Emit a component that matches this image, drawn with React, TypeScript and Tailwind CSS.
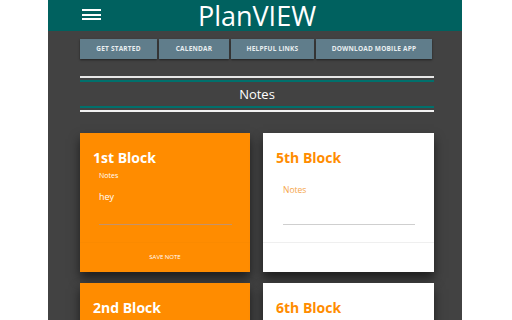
const font = { fontFamily: '"Open Sans", "Noto Sans", sans-serif' };

const navItems = [
  { label: 'GET STARTED', width: 'w-[77px]' },
  { label: 'CALENDAR', width: 'w-[70px]' },
  { label: 'HELPFUL LINKS', width: 'w-[83px]' },
  { label: 'DOWNLOAD MOBILE APP', width: 'w-[116px]' },
];

function NoteCard({ title, variant, value }: { title: string; variant: 'orange' | 'white'; value?: string }) {
  const orange = variant === 'orange';
  return (
    <div
      className={`flex h-[139px] flex-col shadow-[0_6px_10px_rgba(0,0,0,0.55)] ${
        orange ? 'bg-[#ff8c00] text-white' : 'bg-white text-[#ff8c00]'
      }`}
    >
      <div className="h-[34px] pl-[13px] pt-[16px] text-[14px] font-bold leading-[18px]">{title}</div>
      {orange ? (
        <div className="h-[58px] pl-[19px] pr-[18px]">
          <div className="mt-[5px] text-[7px] leading-[8px]">Notes</div>
          <div className="mt-[11px] text-[9px] leading-[12px]">{value}</div>
          <div className="mt-[21px] h-px bg-[#c4936a]" />
        </div>
      ) : (
        <div className="h-[58px] pl-[20px] pr-[19px]">
          <div className="mt-[18px] text-[8.5px] leading-[10px] text-[#f5a54a]">Notes</div>
          <div className="mt-[29px] h-px bg-[#cfcfcf]" />
        </div>
      )}
      <div className={`mt-[17px] border-t ${orange ? 'border-[#fb8a00]' : 'border-[#efefef]'}`} />
      <div className="flex flex-1 items-center justify-center text-[6px] uppercase">
        {orange ? 'Save Note' : ''}
      </div>
    </div>
  );
}

export default function App() {
  return (
    <div className="h-[320px] w-[512px] overflow-hidden bg-white" style={font}>
      <div className="ml-[48px] h-[320px] w-[414px] bg-[#424242]">
        <header className="relative flex h-[31px] items-center justify-center bg-[#00615f]">
          <div className="absolute left-[34px] top-[9px] flex w-[19px] flex-col gap-[2.5px]">
            <span className="h-[2px] bg-white" />
            <span className="h-[2px] bg-white" />
            <span className="h-[2px] bg-white" />
          </div>
          <h1 className="ml-[4px] text-[27px] leading-[30px] text-white">PlanVIEW</h1>
        </header>

        <div className="ml-[32px] w-[354px]">
          <nav className="mt-[8px] flex gap-[2px]">
            {navItems.map((item) => (
              <button
                key={item.label}
                className={`${item.width} flex h-[20px] items-center justify-center bg-[#607d8b] text-[6.5px] font-bold tracking-[0.2px] text-[#e8eef0] shadow-[0_1px_2px_rgba(0,0,0,0.5)]`}
              >
                {item.label}
              </button>
            ))}
          </nav>

          <div className="mt-[17px] h-[2px] bg-[#e6e6e6]" />
          <div className="mt-[2px] h-[2px] bg-[#00706c]" />
          <div className="flex h-[24px] items-center justify-center text-[13px] font-medium leading-[24px] text-white">
            Notes
          </div>
          <div className="h-[2px] bg-[#00706c]" />
          <div className="mt-[2px] h-[2px] bg-[#f2f2f2]" />

          <div className="mt-[21px] grid grid-cols-[170px_171px] gap-x-[13px] gap-y-[11px]">
            <NoteCard title="1st Block" variant="orange" value="hey" />
            <NoteCard title="5th Block" variant="white" />
            <NoteCard title="2nd Block" variant="orange" />
            <NoteCard title="6th Block" variant="white" />
          </div>
        </div>
      </div>
    </div>
  );
}
